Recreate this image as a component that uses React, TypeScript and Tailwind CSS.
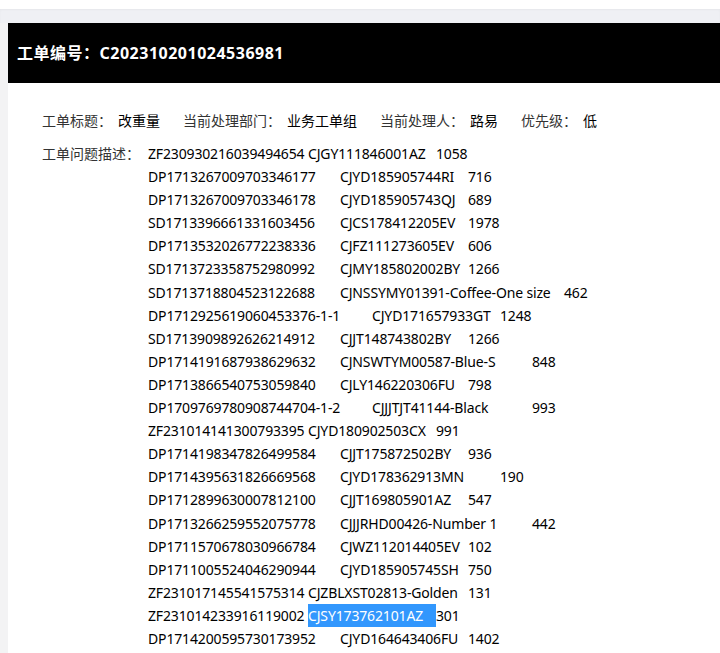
import React from "react";

// [order no, sku, qty, first column width, second column width] — columns follow 32px tab stops
type Line = [string, string, string, string, string];

const lines: Line[] = [
  ["ZF230930216039494654", "CJGY111846001AZ", "1058", "w-[160px]", "w-[128px]"],
  ["DP1713267009703346177", "CJYD185905744RI", "716", "w-[192px]", "w-[128px]"],
  ["DP1713267009703346178", "CJYD185905743QJ", "689", "w-[192px]", "w-[128px]"],
  ["SD1713396661331603456", "CJCS178412205EV", "1978", "w-[192px]", "w-[128px]"],
  ["DP1713532026772238336", "CJFZ111273605EV", "606", "w-[192px]", "w-[128px]"],
  ["SD1713723358752980992", "CJMY185802002BY", "1266", "w-[192px]", "w-[128px]"],
  ["SD1713718804523122688", "CJNSSYMY01391-Coffee-One size", "462", "w-[192px]", "w-[224px]"],
  ["DP1712925619060453376-1-1", "CJYD171657933GT", "1248", "w-[224px]", "w-[128px]"],
  ["SD1713909892626214912", "CJJT148743802BY", "1266", "w-[192px]", "w-[128px]"],
  ["DP1714191687938629632", "CJNSWTYM00587-Blue-S", "848", "w-[192px]", "w-[192px]"],
  ["DP1713866540753059840", "CJLY146220306FU", "798", "w-[192px]", "w-[128px]"],
  ["DP1709769780908744704-1-2", "CJJJTJT41144-Black", "993", "w-[224px]", "w-[160px]"],
  ["ZF231014141300793395", "CJYD180902503CX", "991", "w-[160px]", "w-[128px]"],
  ["DP1714198347826499584", "CJJT175872502BY", "936", "w-[192px]", "w-[128px]"],
  ["DP1714395631826669568", "CJYD178362913MN", "190", "w-[192px]", "w-[160px]"],
  ["DP1712899630007812100", "CJJT169805901AZ", "547", "w-[192px]", "w-[128px]"],
  ["DP1713266259552075778", "CJJJRHD00426-Number 1", "442", "w-[192px]", "w-[192px]"],
  ["DP1711570678030966784", "CJWZ112014405EV", "102", "w-[192px]", "w-[128px]"],
  ["DP1711005524046290944", "CJYD185905745SH", "750", "w-[192px]", "w-[128px]"],
  ["ZF231017145541575314", "CJZBLXST02813-Golden", "131", "w-[160px]", "w-[160px]"],
  ["ZF231014233916119002", "CJSY173762101AZ", "301", "w-[160px]", "w-[128px]"],
  ["DP1714200595730173952", "CJYD164643406FU", "1402", "w-[192px]", "w-[128px]"],
];

const meta = [
  { label: "工单标题：", value: "改重量" },
  { label: "当前处理部门：", value: "业务工单组" },
  { label: "当前处理人：", value: "路易" },
  { label: "优先级：", value: "低" },
];

export default function App() {
  return (
    <div className="min-h-screen bg-white font-['Noto_Sans','Noto_Sans_CJK_SC',sans-serif] text-[14px]">
      <div className="h-[9px] bg-white" />
      <div className="h-[14px] bg-[#eff0f4] shadow-[inset_0_1px_2px_rgba(0,0,0,0.04)]" />
      <div className="flex min-h-[630px]">
        <div className="w-2 shrink-0 bg-[#f3f3f4]" />
        <div className="flex-1">
          <div className="flex h-[60px] items-center bg-black pl-[9px] text-[16px] font-bold tracking-[0.5px] text-white">
            工单编号：C202310201024536981
          </div>

          <div className="pl-[34px] pt-[26px] leading-[23px]">
            <div className="flex gap-[23px]">
              {meta.map((m) => (
                <div key={m.label} className="flex gap-[6px]">
                  <span className="text-[#333]">{m.label}</span>
                  <span className="text-black">{m.value}</span>
                </div>
              ))}
            </div>

            <div className="mt-[10px] flex">
              <div className="w-[106px] shrink-0 text-[#333]">工单问题描述：</div>
              <div className="whitespace-pre leading-[23.1px] tracking-[-0.15px] text-black">
                {lines.map((l, i) => (
                  <div key={i}>
                    <span className={"inline-block " + l[3]}>{l[0]}</span>
                    <span
                      className={
                        "inline-block " + l[4] + (i === 20 ? " bg-[#3297fd] text-white" : "")
                      }
                    >
                      {l[1]}
                    </span>
                    <span>{l[2]}</span>
                  </div>
                ))}
              </div>
            </div>
          </div>
        </div>
      </div>
    </div>
  );
}
